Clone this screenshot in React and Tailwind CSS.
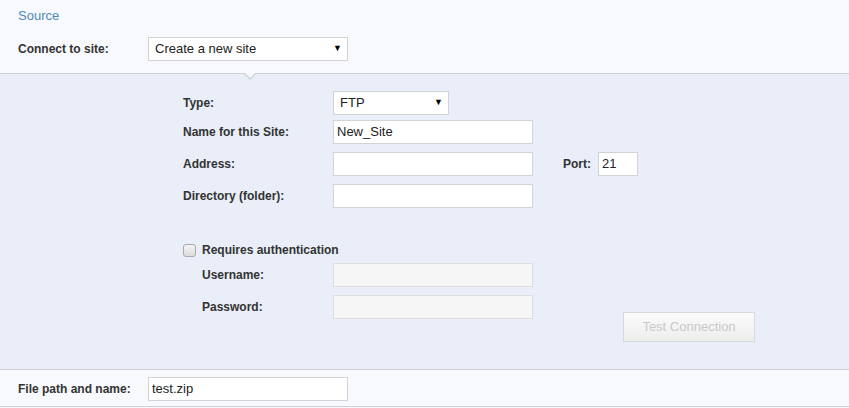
const Field = ({ value = "", disabled = false, className = "" }) => (
  <div
    className={`h-[24px] border flex items-center px-[3px] text-[13px] text-[#222] ${
      disabled ? "bg-[#f6f6f6] border-[#dedede]" : "bg-white border-[#d3d3d3]"
    } ${className}`}
  >
    {value}
  </div>
);

const Select = ({ value, className = "" }) => (
  <div
    className={`h-[24px] bg-white border border-[#d3d3d3] flex items-center justify-between pl-[6px] pr-[5px] text-[13px] text-[#222] ${className}`}
  >
    <span>{value}</span>
    <span className="text-[9px] text-black">▼</span>
  </div>
);

const Label = ({ children, className = "" }) => (
  <span className={`text-[12px] font-bold text-[#333] ${className}`}>{children}</span>
);

export default function App() {
  return (
    <div className="w-[849px] h-[408px] bg-[#f7f9fd] font-['Liberation_Sans',Arial,sans-serif] overflow-hidden">
      {/* source header */}
      <div className="px-[18px] pt-[9px] pb-[12px] border-b border-[#cfd3d9]">
        <div className="text-[13px] leading-[14px] text-[#5089b8]">Source</div>
        <div className="mt-[14px] flex items-center">
          <Label className="w-[130px]">Connect to site:</Label>
          <Select value="Create a new site" className="w-[200px]" />
        </div>
      </div>

      {/* site settings panel */}
      <div className="relative h-[295px] bg-[#e9eef8] pl-[183px] pt-[17px]">
        <div className="absolute left-[243px] -top-[1px] w-0 h-0 border-l-[7px] border-r-[7px] border-t-[7px] border-l-transparent border-r-transparent border-t-[#cfd3d9]" />
        <div className="absolute left-[244px] -top-[2px] w-0 h-0 border-l-[6px] border-r-[6px] border-t-[6px] border-l-transparent border-r-transparent border-t-[#f7f9fd]" />

        <div className="flex items-center">
          <Label className="w-[150px]">Type:</Label>
          <Select value="FTP" className="w-[116px]" />
        </div>
        <div className="mt-[5px] flex items-center">
          <Label className="w-[150px]">Name for this Site:</Label>
          <Field value="New_Site" className="w-[200px]" />
        </div>
        <div className="mt-[8px] flex items-center">
          <Label className="w-[150px]">Address:</Label>
          <Field className="w-[200px]" />
          <Label className="ml-[30px] w-[35px]">Port:</Label>
          <Field value="21" className="w-[40px]" />
        </div>
        <div className="mt-[8px] flex items-center">
          <Label className="w-[150px]">Directory (folder):</Label>
          <Field className="w-[200px]" />
        </div>

        <div className="mt-[34px] flex">
          <div className="w-[350px]">
            <div className="h-[16px] flex items-center">
              <span className="w-[13px] h-[13px] rounded-[3px] border border-[#a9a9a9] bg-gradient-to-b from-[#f4f4f4] to-[#dcdcdc]" />
              <Label className="ml-[6px]">Requires authentication</Label>
            </div>
            <div className="mt-[5px] flex items-center pl-[19px]">
              <Label className="w-[131px]">Username:</Label>
              <Field disabled className="w-[200px]" />
            </div>
            <div className="mt-[8px] flex items-center pl-[19px]">
              <Label className="w-[131px]">Password:</Label>
              <Field disabled className="w-[200px]" />
            </div>
          </div>
          <div className="pl-[90px] pt-[70px]">
            <button
              disabled
              className="w-[132px] h-[30px] border border-[#d9d9d9] bg-gradient-to-b from-[#fbfbfb] to-[#ededed] text-[13px] text-[#c9c9c9]"
            >
              Test Connection
            </button>
          </div>
        </div>
      </div>

      {/* destination file */}
      <div className="border-t border-b border-[#cdd1d6] px-[18px] pt-[7px] pb-[5px] flex items-center">
        <Label className="w-[130px]">File path and name:</Label>
        <Field value="test.zip" className="w-[200px]" />
      </div>
    </div>
  );
}
